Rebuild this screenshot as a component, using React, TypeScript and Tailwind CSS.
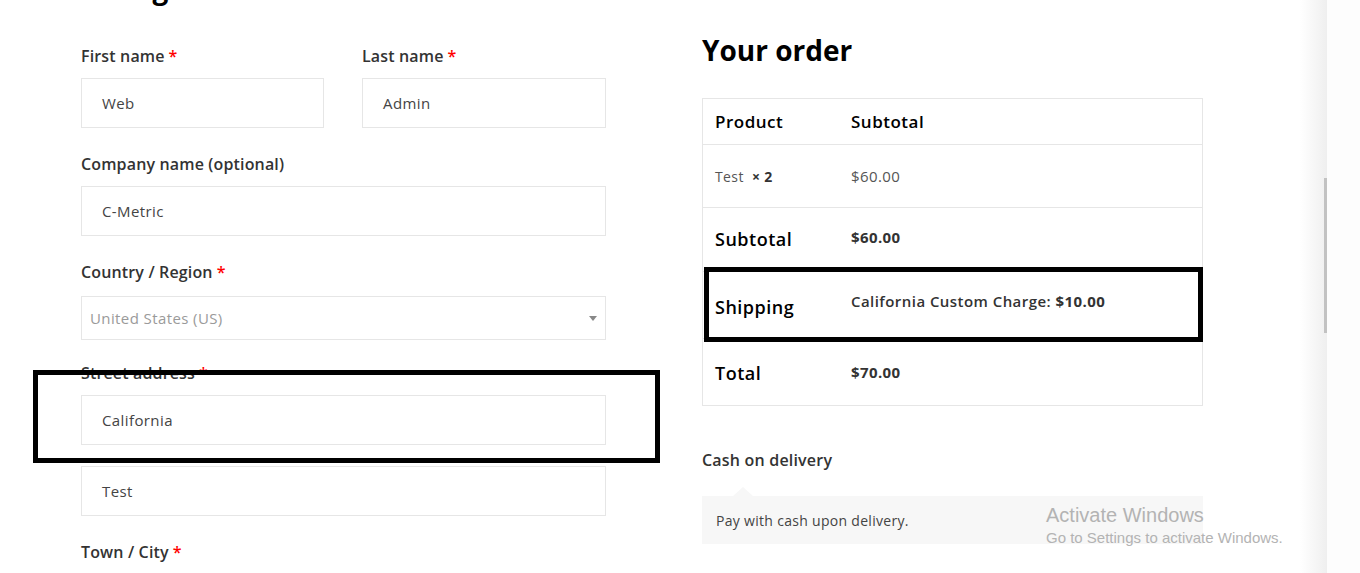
const font = { fontFamily: '"Open Sans", "Noto Sans", sans-serif' };

function Label({ text, required, className = 'mb-[11px]' }: { text: string; required?: boolean; className?: string }) {
  return (
    <label className={`block text-[16px] leading-[22px] font-semibold tracking-[0.15px] text-[#333] ${className}`}>
      {text}
      {required && <span className="text-[#ff0000] ml-1">*</span>}
    </label>
  );
}

function TextInput({ value }: { value: string }) {
  return (
    <div className="h-[50px] border border-[#e6e6e6] bg-white flex items-center px-5 text-[15px] tracking-[0.4px] text-[#444]">
      {value}
    </div>
  );
}

function OrderRow({
  label,
  value,
  labelClass,
  valueClass,
  height,
  children,
}: {
  label: React.ReactNode;
  value: React.ReactNode;
  labelClass: string;
  valueClass: string;
  height: string;
  children?: React.ReactNode;
}) {
  return (
    <div className={`relative flex items-center border-b border-[#e6e6e6] ${height}`}>
      <div className={`w-[148px] pl-3 ${labelClass}`}>{label}</div>
      <div className={`flex-1 ${valueClass}`}>{value}</div>
      {children}
    </div>
  );
}

export default function App() {
  return (
    <div className="relative flex h-[573px] w-[1360px] overflow-hidden bg-white" style={font}>
      <div className="flex flex-1">
        {/* Billing details */}
        <div className="ml-[81px] w-[525px]">
          <h3 className="text-[28px] leading-[36px] font-bold text-black -mt-[30px] mb-[39px]">
            Billing details
          </h3>

          <div className="flex gap-[38px] mb-[25px]">
            <div className="w-[243px]">
              <Label text="First name" required />
              <TextInput value="Web" />
            </div>
            <div className="w-[244px]">
              <Label text="Last name" required />
              <TextInput value="Admin" />
            </div>
          </div>

          <div className="mb-[25px]">
            <Label text="Company name (optional)" />
            <TextInput value="C-Metric" />
          </div>

          <div className="mb-[22px]">
            <Label text="Country / Region" required className="mb-[13px]" />
            <div className="h-[44px] border border-[#e6e6e6] flex items-center justify-between pl-2 pr-[8px] text-[15px] tracking-[0.4px] text-[#9a9a9a]">
              <span>United States (US)</span>
              <svg width="8" height="5" viewBox="0 0 8 5">
                <path d="M0 0h8L4 5z" fill="#888" />
              </svg>
            </div>
          </div>

          <div className="relative">
            <Label text="Street address" required />
            <TextInput value="California" />
            <div className="absolute -left-[48px] -right-[54px] top-[8px] -bottom-[18px] border-[5px] border-black pointer-events-none" />
          </div>

          <div className="mt-[21px] mb-[25px]">
            <TextInput value="Test" />
          </div>

          <div>
            <Label text="Town / City" required />
          </div>
        </div>

        {/* Your order */}
        <div className="ml-[96px] w-[501px]">
          <h3 className="mt-[30px] text-[28px] leading-[40px] font-bold text-black">Your order</h3>

          <div className="mt-[28px] border-t border-l border-r border-[#e6e6e6]">
            <OrderRow
              height="h-[46px]"
              label="Product"
              value="Subtotal"
              labelClass="text-[17px] font-semibold tracking-[0.5px] text-black"
              valueClass="text-[17px] font-semibold tracking-[0.5px] text-black"
            />
            <OrderRow
              height="h-[63px]"
              label={
                <span className="text-[14px] tracking-[0.4px] text-[#555]">
                  Test <span className="ml-1 font-bold text-[#333]">× 2</span>
                </span>
              }
              value="$60.00"
              labelClass=""
              valueClass="text-[15px] tracking-[0.4px] text-[#555]"
            />
            <OrderRow
              height="h-[64px]"
              label="Subtotal"
              value={<span className="relative -top-[2px]">$60.00</span>}
              labelClass="text-[18px] font-semibold tracking-[0.5px] text-black"
              valueClass="text-[15px] font-bold tracking-[0.4px] text-[#333]"
            />
            <OrderRow
              height="h-[67px]"
              label={<span className="relative top-[2px]">Shipping</span>}
              value={
                <span className="relative -top-[4px]">
                  California Custom Charge: <span className="font-bold">$10.00</span>
                </span>
              }
              labelClass="text-[18px] font-semibold tracking-[0.5px] text-black"
              valueClass="text-[15px] font-semibold tracking-[0.45px] text-[#333]"
            >
              <div className="absolute left-[1px] -right-[1px] -top-[5px] bottom-[-4px] border-[5px] border-black pointer-events-none" />
            </OrderRow>
            <OrderRow
              height="h-[67px]"
              label={<span className="relative top-[1px]">Total</span>}
              value="$70.00"
              labelClass="text-[18px] font-semibold tracking-[0.5px] text-black"
              valueClass="text-[15px] font-bold tracking-[0.4px] text-[#333]"
            />
          </div>

          <div className="mt-[43px] text-[16px] leading-[22px] font-semibold tracking-[0.2px] text-[#333]">
            Cash on delivery
          </div>

          <div className="relative mt-[25px] h-[48px] bg-[#f7f7f7] flex items-center pl-[14px] text-[14px] tracking-[0.3px] text-[#444]">
            <span className="absolute left-[31px] -top-[9px] w-0 h-0 border-l-[10px] border-r-[10px] border-b-[9px] border-l-transparent border-r-transparent border-b-[#f7f7f7]" />
            Pay with cash upon delivery.
          </div>
        </div>
      </div>

      {/* scrollbar */}
      <div className="relative w-[27px] h-full bg-gradient-to-r from-[#ffffff] to-[#efefef]">
        <div className="absolute right-0 top-[178px] h-[155px] w-[3px] bg-[#c2c2c2]" />
      </div>
      <div className="w-[33px] h-full bg-[#fdfdfd]" />

      {/* Windows watermark */}
      <div
        className="absolute left-[1046px] top-[502px] text-[#b3b3b3] pointer-events-none"
        style={{ fontFamily: '"Liberation Sans", sans-serif' }}
      >
        <div className="text-[20px] leading-[26px]">Activate Windows</div>
        <div className="text-[15px] leading-[19px]">Go to Settings to activate Windows.</div>
      </div>
    </div>
  );
}
